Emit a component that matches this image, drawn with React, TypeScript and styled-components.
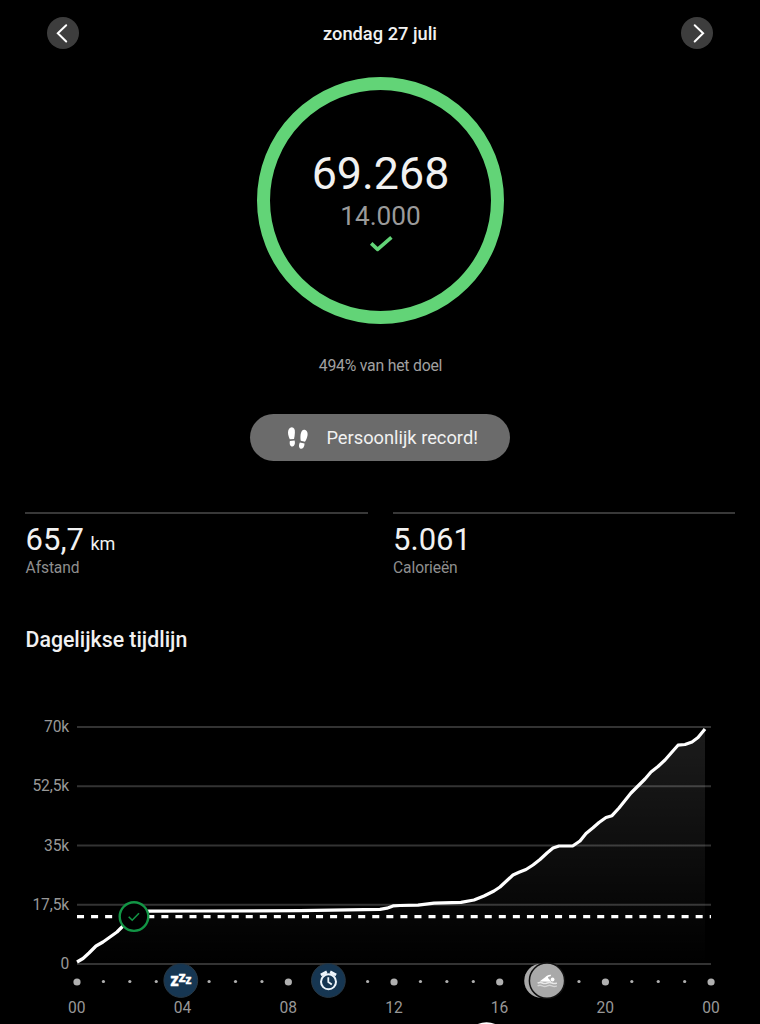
import React from "react";
import styled, { createGlobalStyle } from "styled-components";

const GlobalStyle = createGlobalStyle`
  * { box-sizing: border-box; }
  html, body { margin: 0; background: #000; }
  body { font-family: Roboto, "Liberation Sans", sans-serif; color: #f1f1f1; }
`;

const Screen = styled.main`
  width: 760px;
  height: 1024px;
  overflow: hidden;
  background: #000;
  display: flex;
  flex-direction: column;
`;

const DateBar = styled.header`
  display: flex;
  align-items: center;
  justify-content: space-between;
  height: 32px;
  margin: 17px 47px 0;
`;

const DateTitle = styled.h1`
  margin: 0;
  padding-top: 1px;
  font-size: 18.3px;
  font-weight: 500;
  line-height: 32px;
`;

const RoundButton = styled.button`
  width: 32px;
  height: 32px;
  padding: 0;
  border: 0;
  border-radius: 50%;
  background: #3d3d3d;
  svg { display: block; }
`;

const Ring = styled.section`
  align-self: center;
  width: 247px;
  height: 247px;
  margin: 28px 0 0 1px;
  border: 13px solid #62d477;
  border-radius: 50%;
  display: flex;
  flex-direction: column;
  align-items: center;
  padding-top: 57px;
`;

const Steps = styled.div`
  font-size: 44.8px;
  line-height: 54px;
`;

const Goal = styled.div`
  font-size: 26.2px;
  line-height: 30px;
  color: #9a9a9a;
`;

const GoalCheck = styled.svg`
  margin-top: 4px;
`;

const Percentage = styled.p`
  margin: 31px 0 0 1px;
  text-align: center;
  font-size: 15.8px;
  letter-spacing: -0.22px;
  line-height: 21px;
  color: #a0a0a0;
`;

const RecordPill = styled.div`
  align-self: center;
  display: flex;
  align-items: center;
  width: 260px;
  height: 47px;
  margin-top: 38px;
  padding-left: 37px;
  border-radius: 24px;
  background: #6b6b6b;
  font-size: 18.3px;
`;

const RecordText = styled.span`
  margin-left: 17.4px;
  white-space: nowrap;
`;

const Stats = styled.section`
  display: grid;
  grid-template-columns: 1fr 1fr;
  gap: 25px;
  margin: 51px 25px 0;
`;

const Stat = styled.div`
  height: 67px;
  padding: 6.5px 0 0 0.6px;
  border-top: 2px solid #383838;
`;

const StatValue = styled.div`
  height: 38px;
  font-size: 31px;
  line-height: 37px;
  white-space: nowrap;
`;

const Unit = styled.span`
  margin-left: 6.5px;
  font-size: 18px;
`;

const StatLabel = styled.div`
  font-size: 15.6px;
  letter-spacing: -0.12px;
  line-height: 18px;
  color: #8e8e8e;
`;

const SectionTitle = styled.h2`
  margin: 48px 25.5px 0;
  font-size: 21.3px;
  line-height: 26px;
  font-weight: 500;
`;

const Chart = styled.svg`
  display: block;
  flex: none;
  margin-top: 47px;
  font-family: Roboto, "Liberation Sans", sans-serif;
  font-size: 15.6px;
`;

const TickLabel = styled.text`
  fill: #989898;
  text-anchor: end;
  letter-spacing: -0.15px;
`;

const HourLabel = styled.text`
  fill: #989898;
  text-anchor: middle;
`;

const SleepLetter = styled.text`
  fill: #fff;
  stroke: #fff;
  stroke-width: 0.3px;
  font-weight: 800;
`;

const ticks: [string, number][] = [
  ["70k", 27],
  ["52,5k", 86.3],
  ["35k", 145.6],
  ["17,5k", 204.8],
  ["0", 264],
];

const hours = ["00", "04", "08", "12", "16", "20", "00"];

const series: [number, number][] = [
  [77, 262], [83, 258.5], [89, 253], [96, 246], [103, 242], [110, 237], [117, 232], [124, 225],
  [134, 216], [142, 212], [149, 211.2], [200, 211], [300, 210.7], [380, 209.3], [387, 208.2],
  [393, 205.9], [400, 205.5], [418, 205.2], [434, 203.2], [461, 202.3], [474, 200], [484, 196],
  [494, 191], [500, 187], [507, 180.5], [513, 175], [519, 172.3], [526, 169.5], [533, 165],
  [540, 159.5], [547, 153], [553, 148], [559, 146], [573, 145.8], [580, 141], [586, 133.5],
  [593, 127.8], [599, 122.5], [606, 117.5], [612, 115.7], [619, 108], [631, 93], [638, 86],
  [645, 79], [651, 72], [658, 66.5], [665, 60], [672, 52], [678, 45.2], [685, 44.5],
  [692, 42], [698, 37.5], [705, 29],
];

const linePath = "M" + series.map(([x, y]) => `${x} ${y}`).join(" L");
const hiddenDots = [4, 9, 10, 17, 18];

const Footprints = () => (
  <svg width="22" height="24" viewBox="0 0 22 24" fill="#fff">
    <path d="M4.8 1.2C7 1.2 8.1 3.4 7.9 6.4C7.7 9 7.4 11.4 7 12.9L2.8 13.2C1.9 11.6 1 9 1 6.6C1 3.4 2.6 1.2 4.8 1.2Z" />
    <path d="M2.9 14.9L7.6 14.6C8.4 17 7.8 20.4 5.5 20.5C3 20.7 2.3 17.6 2.9 14.9Z" />
    <path d="M17.6 3.7C19.9 4 21 6.6 20.5 9.6C20.1 12 19 14.4 18 15.8L13.8 14.8C13.4 13.5 13.3 11 13.6 8.6C14 5.4 15.5 3.4 17.6 3.7Z" />
    <path d="M12.9 16.5L17.5 17.6C17.5 20.4 16.2 23.2 13.8 22.7C11.4 22.2 11.7 18.6 12.9 16.5Z" />
  </svg>
);

const Timeline = () => (
  <Chart width="760" height="324" viewBox="0 0 760 324">
    <defs>
      <linearGradient id="area" x1="0" y1="29" x2="0" y2="264" gradientUnits="userSpaceOnUse">
        <stop offset="0" stopColor="#fff" stopOpacity="0.11" />
        <stop offset="1" stopColor="#fff" stopOpacity="0" />
      </linearGradient>
    </defs>
    {ticks.map(([label, y]) => (
      <g key={label}>
        <line x1="77" x2="711" y1={y} y2={y} stroke="#333" strokeWidth="2" />
        <TickLabel x="69" y={y + 5}>{label}</TickLabel>
      </g>
    ))}
    <path d={`${linePath} V264 H77 Z`} fill="url(#area)" />
    <line x1="77" x2="711" y1="216.6" y2="216.6" stroke="#fff" strokeWidth="3.3" strokeDasharray="7.03 7.03" />
    <path d={linePath} fill="none" stroke="#fff" strokeWidth="3.2" strokeLinejoin="round" />
    <circle cx="134" cy="216.6" r="14.3" fill="#000" stroke="#129545" strokeWidth="2.4" />
    <path d="M128.7 216.8L132.2 220.2L139 213.2" fill="none" stroke="#129545" strokeWidth="1.6" />

    {Array.from({ length: 25 }, (_, i) =>
      hiddenDots.includes(i) ? null : (
        <circle
          key={i}
          cx={77 + i * 26.42}
          cy={i % 4 ? 281.5 : 282}
          r={i % 4 ? 1.6 : 3.6}
          fill="#b0b0b0"
        />
      )
    )}
    {hours.map((h, i) => (
      <HourLabel key={i} x={76.8 + i * 105.7} y="313">{h}</HourLabel>
    ))}

    <g fill="#163652" stroke="#283743" strokeWidth="1">
      <circle cx="180.8" cy="280.5" r="16.9" />
      <circle cx="328.4" cy="280.5" r="16.9" />
    </g>
    <SleepLetter x="170.3" y="286.3" fontSize="18.5" textLength="8.6" lengthAdjust="spacingAndGlyphs">z</SleepLetter>
    <SleepLetter x="178.5" y="282.2" fontSize="15.5" textLength="7.3" lengthAdjust="spacingAndGlyphs">z</SleepLetter>
    <SleepLetter x="185.4" y="284.2" fontSize="13" textLength="6" lengthAdjust="spacingAndGlyphs">z</SleepLetter>
    <g fill="none" stroke="#eef5fb">
      <circle cx="328.5" cy="281.8" r="7.5" strokeWidth="2" />
      <path d="M328.3 277.2V282L331.8 284.5" strokeWidth="1.8" />
      <path d="M320.9 275L326.9 271.9M336.1 275L330.1 271.9" strokeWidth="3" />
    </g>

    <circle cx="541.2" cy="280.7" r="17" fill="#a9a9a9" />
    <circle cx="547" cy="280.7" r="17.6" fill="#a9a9a9" stroke="#111" strokeWidth="1.5" />
    <path
      d="M539.5 281.5L545.2 277.2C546.6 275.5 548.8 274.5 551.2 274.8L550.6 276.3C548.8 276.3 547.8 277 548 278L551.5 281.8Z"
      fill="#fff"
    />
    <circle cx="552.6" cy="279.5" r="1.9" fill="#fff" />
    <path d="M537.6 283.2Q540 281.8 542.4 283T547.2 283T552 283T556.8 283" fill="none" stroke="#e8e8e8" strokeWidth="1.5" />
    <path d="M537.6 285.9Q540 284.7 542.4 285.9T547.2 285.9T552 285.9T556.8 285.9" fill="none" stroke="#d4d4d4" strokeWidth="1.4" />
    <circle cx="486.5" cy="345.3" r="23" fill="#fff" />
  </Chart>
);

export default function App() {
  return (
    <Screen>
      <GlobalStyle />
      <DateBar>
        <RoundButton aria-label="Vorige dag">
          <svg width="32" height="32" viewBox="0 0 32 32" fill="none" stroke="#fff" strokeWidth="2" strokeLinecap="round">
            <path d="M19.2 8.3L10.8 16.3L19.2 24.5" />
          </svg>
        </RoundButton>
        <DateTitle>zondag 27 juli</DateTitle>
        <RoundButton aria-label="Volgende dag">
          <svg width="32" height="32" viewBox="0 0 32 32" fill="none" stroke="#fff" strokeWidth="2" strokeLinecap="round">
            <path d="M13.7 8.3L22.1 16.3L13.7 24.5" />
          </svg>
        </RoundButton>
      </DateBar>

      <Ring>
        <Steps>69.268</Steps>
        <Goal>14.000</Goal>
        <GoalCheck width="24" height="18" viewBox="0 0 24 18" fill="none" stroke="#62d477" strokeWidth="3.6" strokeLinejoin="round">
          <path d="M2.2 8.4L8.6 14.4L22.4 2.4" />
        </GoalCheck>
      </Ring>
      <Percentage>494% van het doel</Percentage>
      <RecordPill>
        <Footprints />
        <RecordText>Persoonlijk record!</RecordText>
      </RecordPill>

      <Stats>
        <Stat>
          <StatValue>65,7<Unit>km</Unit></StatValue>
          <StatLabel>Afstand</StatLabel>
        </Stat>
        <Stat>
          <StatValue>5.061</StatValue>
          <StatLabel>Calorieën</StatLabel>
        </Stat>
      </Stats>

      <SectionTitle>Dagelijkse tijdlijn</SectionTitle>
      <Timeline />
    </Screen>
  );
}
